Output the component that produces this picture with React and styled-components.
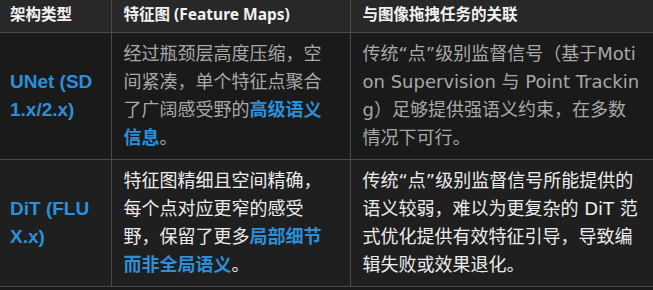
import React from 'react';
import styled, { createGlobalStyle } from 'styled-components';

const GlobalStyle = createGlobalStyle`
  html, body {
    margin: 0;
    padding: 0;
    background: #1a1a1a;
    overflow: hidden;
  }
  body {
    font-family: "DejaVu Sans", "Noto Sans CJK SC", sans-serif;
  }
`;

const Table = styled.table`
  width: 653px;
  border-collapse: collapse;
  table-layout: fixed;
  font-size: 18px;
  line-height: 28px;
`;

const Col = styled.col`
  width: ${props => props.w}px;
`;

const HeadCell = styled.th`
  background: #282828;
  color: #f2f2f2;
  font-family: "Noto Sans", "Noto Sans CJK SC", sans-serif;
  font-size: 15.5px;
  font-weight: 700;
  text-align: left;
  height: 31px;
  padding: 0 12px 4px;
  border-bottom: 1px solid #4a4a4a;
  border-left: 1px solid #4a4a4a;
  box-sizing: border-box;
  &:first-child {
    border-left: none;
    padding-left: 10px;
  }
`;

const Row = styled.tr`
  background: ${props => (props.alt ? '#1f1f1f' : '#1a1a1a')};
  color: ${props => (props.alt ? '#ececec' : '#a8a8a8')};
`;

const Cell = styled.td`
  padding: 7px ${props => props.$pr || 12}px 7px 12px;
  height: 126px;
  box-sizing: border-box;
  vertical-align: middle;
  word-break: break-all;
  border-bottom: 1px solid #4a4a4a;
  border-left: 1px solid #4a4a4a;
`;

const NameCell = styled(Cell)`
  border-left: none;
  padding-left: 10px;
  padding-right: 13px;
  color: #2b8fdb;
  font-family: "Liberation Sans", sans-serif;
  font-size: 19px;
  font-weight: 700;
`;

const Strong = styled.strong`
  color: #2b8fdb;
  font-weight: 700;
`;

export default function App() {
  return (
    <>
      <GlobalStyle />
      <Table>
        <colgroup>
          <Col w={111} />
          <Col w={239} />
          <Col w={303} />
        </colgroup>
        <thead>
          <tr>
            <HeadCell>架构类型</HeadCell>
            <HeadCell>特征图 (Feature Maps)</HeadCell>
            <HeadCell>与图像拖拽任务的关联</HeadCell>
          </tr>
        </thead>
        <tbody>
          <Row>
            <NameCell>UNet (SD 1.x/2.x)</NameCell>
            <Cell>
              经过瓶颈层高度压缩，空间紧凑，单个特征点聚合了广阔感受野的<Strong>高级语义信息</Strong>。
            </Cell>
            <Cell $pr={13}>
              传统“点”级别监督信号（基于Motion Supervision 与 Point Tracking）足够提供强语义约束，在多数情况下可行。
            </Cell>
          </Row>
          <Row alt>
            <NameCell>DiT (FLUX.x)</NameCell>
            <Cell>
              特征图精细且空间精确，每个点对应更窄的感受野，保留了更多<Strong>局部细节而非全局语义</Strong>。
            </Cell>
            <Cell $pr={13}>
              传统“点”级别监督信号所能提供的语义较弱，难以为更复杂的 DiT 范式优化提供有效特征引导，导致编辑失败或效果退化。
            </Cell>
          </Row>
        </tbody>
      </Table>
    </>
  );
}
